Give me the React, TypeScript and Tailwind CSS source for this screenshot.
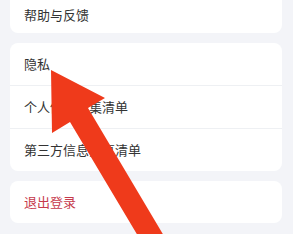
const rows = ["隐私", "个人信息收集清单", "第三方信息共享清单"];

function Arrow() {
  return (
    <svg
      className="absolute left-0 top-0 pointer-events-none"
      width="293"
      height="234"
      viewBox="0 0 293 234"
    >
      <polygon
        points="51,70 105,98 88,108 164,236 138,236 70,122 52,133"
        fill="#ef3a1b"
      />
    </svg>
  );
}

export default function App() {
  return (
    <div
      className="relative w-[293px] h-[234px] overflow-hidden bg-[#f3f4f8]"
      style={{ fontFamily: '"Noto Sans CJK SC", "Noto Sans", sans-serif' }}
    >
      <div className="flex flex-col gap-[10px] pl-[10px] pr-[11px]">
        {/* Help card, cut off at top */}
        <div className="h-[33px] bg-white rounded-b-lg flex items-end pl-[14px] pb-[9px]">
          <span className="text-[13px] leading-[18px] text-[#333]">帮助与反馈</span>
        </div>

        {/* Privacy group */}
        <div className="bg-white rounded-lg flex flex-col">
          {rows.map((label, i) => (
            <div key={label} className="flex flex-col">
              {i > 0 && <div className="h-px bg-[#eef0f3]"></div>}
              <div className="h-[42px] flex items-center pl-[14px]">
                <span className="text-[13px] leading-[18px] text-[#333]">{label}</span>
              </div>
            </div>
          ))}
        </div>

        {/* Logout */}
        <div className="h-[42px] bg-white rounded-lg flex items-center pl-[14px]">
          <span className="text-[13px] leading-[18px] text-[#c63a4c]">退出登录</span>
        </div>
      </div>
      <Arrow />
    </div>
  );
}
